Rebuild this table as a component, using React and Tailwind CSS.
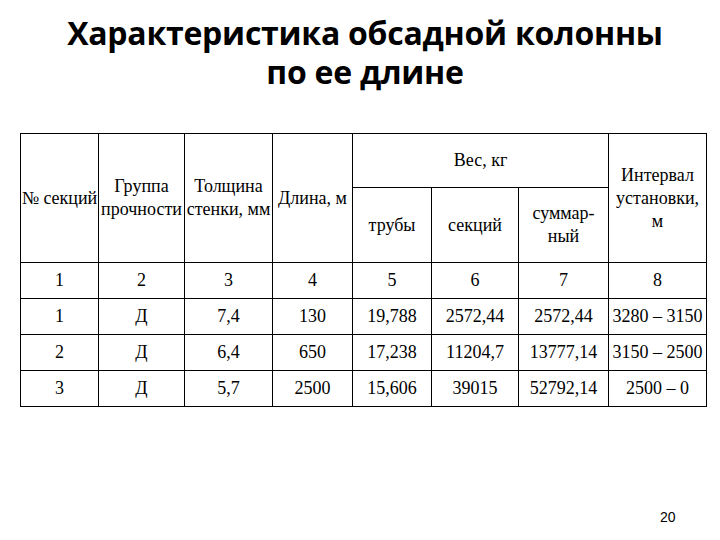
const widths = [78, 86, 88, 80, 79, 87, 90, 98];

const rows = [
  ["1", "Д", "7,4", "130", "19,788", "2572,44", "2572,44", "3280 – 3150"],
  ["2", "Д", "6,4", "650", "17,238", "11204,7", "13777,14", "3150 – 2500"],
  ["3", "Д", "5,7", "2500", "15,606", "39015", "52792,14", "2500 – 0"],
];

const cell = "border border-black text-center align-middle p-0 [font-family:'Liberation_Serif','Times_New_Roman',serif]";

export default function App() {
  return (
    <div className="w-[720px] h-[540px] bg-white relative overflow-hidden">
      <h1 className="pt-[13px] pl-[10px] text-center text-[32px] leading-[39px] font-bold text-black tracking-[-0.25px] font-['Open_Sans',sans-serif]">
        Характеристика обсадной колонны
        <br />
        по ее длине
      </h1>

      <table className="absolute left-[20px] top-[133px] border-collapse table-fixed text-[18px] leading-[23px] text-black">
        <colgroup>
          {widths.map((w, i) => (
            <col key={i} style={{ width: w }} />
          ))}
        </colgroup>
        <tbody>
          <tr className="h-[54px]">
            <td rowSpan={2} className={cell + " whitespace-nowrap"}>№ секций</td>
            <td rowSpan={2} className={cell}>Группа<br />прочности</td>
            <td rowSpan={2} className={cell + " whitespace-nowrap"}>Толщина<br />стенки, мм</td>
            <td rowSpan={2} className={cell + " whitespace-nowrap"}>Длина, м</td>
            <td colSpan={3} className={cell}>Вес, кг</td>
            <td rowSpan={2} className={cell}>Интервал<br />установки,<br />м</td>
          </tr>
          <tr className="h-[75px]">
            <td className={cell}>трубы</td>
            <td className={cell}>секций</td>
            <td className={cell}>суммар-<br />ный</td>
          </tr>
          <tr className="h-[36px]">
            {["1", "2", "3", "4", "5", "6", "7", "8"].map((n) => (
              <td key={n} className={cell}>{n}</td>
            ))}
          </tr>
          {rows.map((r, i) => (
            <tr key={i} className="h-[36px]">
              {r.map((v, j) => (
                <td key={j} className={cell + " whitespace-nowrap"}>{v}</td>
              ))}
            </tr>
          ))}
        </tbody>
      </table>

      <div className="absolute left-[660px] top-[507px] text-[14px] text-black font-['Liberation_Sans',sans-serif]">
        20
      </div>
    </div>
  );
}
